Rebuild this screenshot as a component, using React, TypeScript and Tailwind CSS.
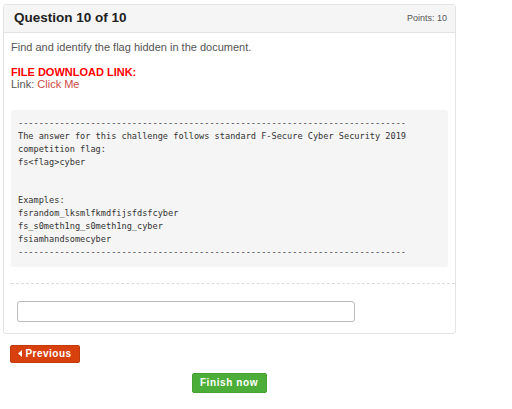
const dashes = '---------------------------------------------------------------------------';

const preText = `${dashes}
The answer for this challenge follows standard F-Secure Cyber Security 2019
competition flag:
fs<flag>cyber


Examples:
fsrandom_lksmlfkmdfijsfdsfcyber
fs_s0meth1ng_s0meth1ng_cyber
fsiamhandsomecyber
${dashes}`;

const App = () => {
  return (
    <div className="w-[512px] h-[409px] bg-white font-['Liberation_Sans',Arial,sans-serif]">
      <div className="pl-[3px] pt-[4px]">
        <div className="w-[453px] border border-[#e3e3e3] rounded-[3px] bg-white">
          <div className="h-[28px] bg-[#f5f5f5] border-b border-[#e3e3e3] flex items-center justify-between pl-[10px] pr-[8px]">
            <h3 className="text-[13.5px] font-bold text-[#222]">Question 10 of 10</h3>
            <span className="text-[9px] text-[#555]">Points: 10</span>
          </div>
          <div className="pl-[7px] pt-[7px] pb-[9px]">
            <p className="text-[11px] leading-[14px] text-[#555]">Find and identify the flag hidden in the document.</p>
            <p className="mt-[12px] text-[11px] leading-[12px] font-bold text-[#ff0000]">FILE DOWNLOAD LINK:</p>
            <p className="text-[11px] leading-[12px] text-[#555]">
              Link: <a className="text-[#cc4a44]">Click Me</a>
            </p>
            <pre className="mt-[20px] mr-[7px] bg-[#f5f5f5] rounded-[3px] pl-[7px] pt-[7px] pb-[8px] font-['DejaVu_Sans_Mono',monospace] text-[8.6px] leading-[12.9px] text-[#333] whitespace-pre">
              {preText}
            </pre>
            <div className="mt-[16px] border-t border-dashed border-[#ddd]" />
            <div className="pt-[16px] pl-[6px]">
              <input
                type="text"
                className="w-[338px] h-[21px] border border-[#bbb] rounded-[3px] bg-white outline-none"
              />
            </div>
          </div>
        </div>
      </div>
      <div className="pl-[10px] pt-[11px]">
        <button className="h-[18px] w-[70px] bg-[#d8400e] border border-[#c23a0c] rounded-[2px] text-white text-[10px] font-bold tracking-[0.5px] flex items-center justify-center gap-[2px]">
          <svg width="5" height="7" viewBox="0 0 5 7" fill="white">
            <path d="M4 0 L0 3.5 L4 7 Z" />
          </svg>
          Previous
        </button>
      </div>
      <div className="flex justify-center w-[458px] pt-[10px]">
        <button className="h-[20px] w-[75px] bg-[#4cae38] border border-[#44a030] rounded-[2px] text-white text-[10px] font-bold tracking-[0.6px]">
          Finish now
        </button>
      </div>
    </div>
  );
};

export default App;
